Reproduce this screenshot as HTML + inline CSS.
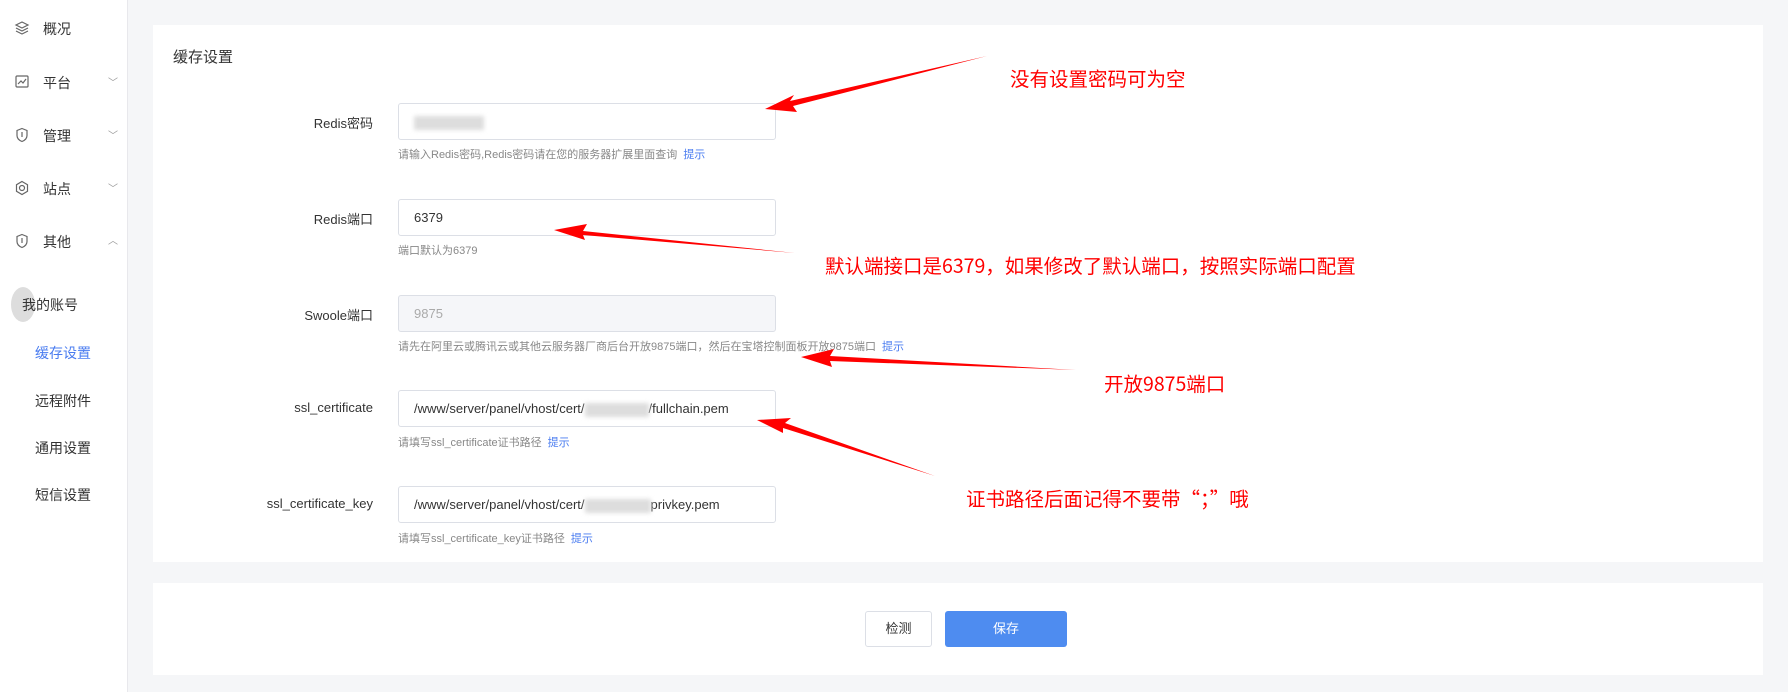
<!DOCTYPE html>
<html><head><meta charset="utf-8"><style>
*{margin:0;padding:0;box-sizing:border-box}
body{width:1788px;height:692px;background:#f5f6f8;font-family:"Liberation Sans","Noto Sans CJK SC",sans-serif;position:relative;overflow:hidden;color:#333}
.side{position:absolute;left:0;top:0;width:128px;height:692px;background:#fff;border-right:1px solid #e8e8ec}
.abs{position:absolute;white-space:nowrap}
.si{font-size:14px;color:#333;left:43px}
.sub{font-size:14px;color:#333;left:35px}
.chev{left:108px;font-size:10px;color:#999}
.card{position:absolute;background:#fff}
.lbl{font-size:13px;color:#333;text-align:right;width:300px;left:73px}
.inp{position:absolute;left:398px;width:378px;height:37px;border:1px solid #dcdfe6;border-radius:3px;background:#fff;font-size:13px;color:#333;padding-left:15px;line-height:35px}
.help{font-size:11px;color:#888;left:398px}
.help b{font-weight:normal;color:#4a7cf0;margin-left:6px}
.blur{display:inline-block;background:#ddd;filter:blur(2px);height:14px;vertical-align:middle}
.red{color:#f00;font-size:19.5px;font-family:"Noto Sans CJK SC",sans-serif}
</style></head><body>
<div class="side"></div>
<svg class="abs" style="left:14px;top:20px" width="16" height="16" viewBox="0 0 16 16" fill="none" stroke="#666" stroke-width="1.2"><path d="M8 2L14 5 8 8 2 5z M2 8l6 3 6-3 M2 11l6 3 6-3"/></svg>
<div class="abs si" style="top:19px">概况</div>
<svg class="abs" style="left:14px;top:74px" width="16" height="16" viewBox="0 0 16 16" fill="none" stroke="#666" stroke-width="1.2"><rect x="2" y="2" width="12" height="11" rx="1"/><path d="M4 10l3-3 2 2 3-4"/></svg>
<div class="abs si" style="top:73px">平台</div><div class="abs chev" style="top:74px">﹀</div>
<svg class="abs" style="left:14px;top:127px" width="16" height="16" viewBox="0 0 16 16" fill="none" stroke="#666" stroke-width="1.2"><path d="M8 1.5l5 2v5c0 3-2.5 5-5 6-2.5-1-5-3-5-6v-5z M8 5v5"/></svg>
<div class="abs si" style="top:126px">管理</div><div class="abs chev" style="top:127px">﹀</div>
<svg class="abs" style="left:14px;top:180px" width="16" height="16" viewBox="0 0 16 16" fill="none" stroke="#666" stroke-width="1.2"><circle cx="8" cy="8" r="2.5"/><path d="M8 1.5l5.5 3.2v6.6L8 14.5 2.5 11.3V4.7z"/></svg>
<div class="abs si" style="top:179px">站点</div><div class="abs chev" style="top:180px">﹀</div>
<svg class="abs" style="left:14px;top:233px" width="16" height="16" viewBox="0 0 16 16" fill="none" stroke="#666" stroke-width="1.2"><path d="M8 1.5l5 2v5c0 3-2.5 5-5 6-2.5-1-5-3-5-6v-5z M8 5v5"/></svg>
<div class="abs si" style="top:232px">其他</div><div class="abs chev" style="top:232px">︿</div>
<div class="abs" style="left:11px;top:287px;width:24px;height:35px;border-radius:50%;background:#ddd"></div>
<div class="abs sub" style="top:295px;left:22px">我的账号</div>
<div class="abs sub" style="top:343px;color:#4a7cf0">缓存设置</div>
<div class="abs sub" style="top:391px">远程附件</div>
<div class="abs sub" style="top:438px">通用设置</div>
<div class="abs sub" style="top:485px">短信设置</div>

<div class="card" style="left:153px;top:25px;width:1610px;height:537px"></div>
<div class="card" style="left:153px;top:583px;width:1610px;height:92px"></div>
<div class="abs" style="left:173px;top:46px;font-size:15px;color:#333">缓存设置</div>

<div class="abs lbl" style="top:113px">Redis密码</div>
<div class="inp" style="top:103px"><span class="blur" style="width:70px;margin-left:0"></span></div>
<div class="abs help" style="top:146px">请输入Redis密码,Redis密码请在您的服务器扩展里面查询<b>提示</b></div>

<div class="abs lbl" style="top:209px">Redis端口</div>
<div class="inp" style="top:199px">6379</div>
<div class="abs help" style="top:242px">端口默认为6379</div>

<div class="abs lbl" style="top:305px">Swoole端口</div>
<div class="inp" style="top:295px;background:#f5f6f9;color:#aaa">9875</div>
<div class="abs help" style="top:338px">请先在阿里云或腾讯云或其他云服务器厂商后台开放9875端口，然后在宝塔控制面板开放9875端口<b>提示</b></div>

<div class="abs lbl" style="top:400px">ssl_certificate</div>
<div class="inp" style="top:390px">/www/server/panel/vhost/cert/<span class="blur" style="width:64px"></span>/fullchain.pem</div>
<div class="abs help" style="top:434px">请填写ssl_certificate证书路径<b>提示</b></div>

<div class="abs lbl" style="top:496px">ssl_certificate_key</div>
<div class="inp" style="top:486px">/www/server/panel/vhost/cert/<span class="blur" style="width:66px"></span>privkey.pem</div>
<div class="abs help" style="top:530px">请填写ssl_certificate_key证书路径<b>提示</b></div>

<div class="abs" style="left:865px;top:611px;width:67px;height:36px;border:1px solid #dcdfe6;border-radius:3px;font-size:13px;text-align:center;line-height:34px;color:#333;background:#fff">检测</div>
<div class="abs" style="left:945px;top:611px;width:122px;height:36px;border-radius:3px;background:#4e8cf0;font-size:13px;text-align:center;line-height:36px;color:#fff">保存</div>

<div class="abs red" style="left:1010px;top:63px">没有设置密码可为空</div>
<div class="abs red" style="left:825px;top:250px">默认端接口是6379，如果修改了默认端口，按照实际端口配置</div>
<div class="abs red" style="left:1104px;top:368px">开放9875端口</div>
<div class="abs red" style="left:966px;top:483px">证书路径后面记得不要带“；”哦</div>

<svg class="abs" style="left:0;top:0" width="1788" height="692">
<g fill="#f00">
<path d="M987 56 L790 101 L794 95 L765 109 L797 112 L793 106 Z"/>
<path d="M795 253 L583 231 L587 224 L554 230 L585 240 L583 235 Z"/>
<path d="M1076 370 L830 356 L834 349 L801 357 L832 367 L830 361 Z"/>
<path d="M935 476 L785 423 L791 418 L757 420 L783 433 L783 428 Z"/>
</g></svg>
</body></html>
